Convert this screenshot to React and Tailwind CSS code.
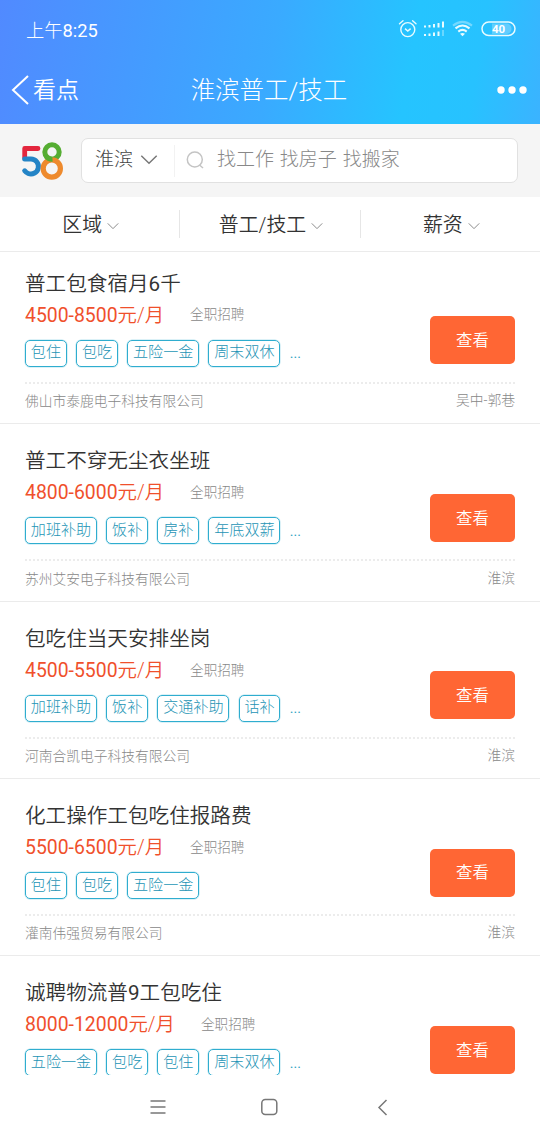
const jobs = [
  { title: '普工包食宿月6千', pay: '4500-8500元/月', tags: ['包住', '包吃', '五险一金', '周末双休'], more: true, company: '佛山市泰鹿电子科技有限公司', place: '吴中-郭巷' },
  { title: '普工不穿无尘衣坐班', pay: '4800-6000元/月', tags: ['加班补助', '饭补', '房补', '年底双薪'], more: true, company: '苏州艾安电子科技有限公司', place: '淮滨' },
  { title: '包吃住当天安排坐岗', pay: '4500-5500元/月', tags: ['加班补助', '饭补', '交通补助', '话补'], more: true, company: '河南合凯电子科技有限公司', place: '淮滨' },
  { title: '化工操作工包吃住报路费', pay: '5500-6500元/月', tags: ['包住', '包吃', '五险一金'], more: false, company: '灌南伟强贸易有限公司', place: '淮滨' },
  { title: '诚聘物流普9工包吃住', pay: '8000-12000元/月', tags: ['五险一金', '包吃', '包住', '周末双休'], more: true, company: '', place: '' },
];

function Chevron({ className }) {
  return (
    <svg viewBox="0 0 16 10" fill="none" stroke="currentColor" className={className}>
      <path d="M1 1.5 8 8.5 15 1.5" strokeWidth="1.3" />
    </svg>
  );
}

// Digits are set a step heavier than the characters around them.
function Mixed({ text }) {
  return text.split(/([0-9:-]+)/).map((part, i) =>
    i % 2 ? <span key={i} className="font-normal">{part}</span> : part
  );
}

function StatusIcons() {
  return (
    <svg width="118" height="20" viewBox="0 0 118 20" fill="none" stroke="#e8fbff" className="shrink-0">
      <circle cx="9.8" cy="10.6" r="7" strokeWidth="1.4" />
      <path d="M7 9.6 9.8 12 12.6 9.6" strokeWidth="1.4" />
      <path d="M1.5 4.8 5 1.8M18 4.8 14.6 1.8" strokeWidth="1.4" strokeLinecap="round" />
      <g strokeWidth="2">
        <path d="M27 6.500v2M31.500 6v2.500M36 5v3.500M40.500 4v4.500M45 2.500v6" />
        <path d="M27 15v2M31.500 14.500v2.500M36 13.500v3.500M40.500 12.500v4.500" />
        <path d="M45 11v6" opacity=".35" />
      </g>
      <g strokeWidth="2.100">
        <path d="M55 6.6Q64.500 -1 74 6.600" opacity=".4" />
        <path d="M57.500 9.400Q64.500 3.600 71.500 9.400" />
        <path d="M60.300 12.600Q64.500 9.200 68.700 12.600" />
      </g>
      <path d="M62 14.800Q64.500 13 67 14.800L64.500 17.200Z" fill="#e8fbff" stroke="none" />
      <path d="M94 4.500h14.500a5 5 0 0 1 5 5v.5a5 5 0 0 1-5 5H94z" fill="#fff" opacity=".25" stroke="none" />
      <rect x="84" y="3" width="33" height="13.500" rx="6.750" strokeWidth="1.500" />
      <text x="100.500" y="13.800" textAnchor="middle" fill="#fff" stroke="none" fontSize="11.500" fontWeight="700" fontFamily="Roboto, sans-serif">40</text>
    </svg>
  );
}

function Logo() {
  return (
    <svg width="44" height="40" viewBox="0 0 44 40" fill="none" className="shrink-0">
      <circle cx="32" cy="11" r="7.200" stroke="#55ad32" strokeWidth="5" />
      <path d="M18 7.500H4.700V17" stroke="#e3263d" strokeWidth="4.800" strokeLinejoin="round" strokeLinecap="round" />
      <path d="M4.700 18h6.300a7.500 7.500 0 1 1-2.800 14.500q-2-.8-3.500-2.700" stroke="#2484c6" strokeWidth="5" strokeLinecap="round" strokeLinejoin="round" />
      <circle cx="31.800" cy="27.500" r="8.600" stroke="#ee8a2d" strokeWidth="5.200" />
      <path d="M26 15.200q2.500 3.200 6.500 3" stroke="#55ad32" strokeWidth="5" />
    </svg>
  );
}

function JobCard({ job, first }) {
  return (
    <article className={`flex shrink-0 flex-col border-b border-[#ebebeb] px-[25px] ${first ? 'h-[172.4px] pt-[15.7px]' : 'h-[177.35px] pt-[21px]'}`}>
      <div className="flex h-[114px] shrink-0 justify-between">
        <div className="flex flex-col pt-[1px]">
          <h2 className="h-[30px] text-[20.6px] leading-[30px] text-[#333]"><Mixed text={job.title} /></h2>
          <div className="flex h-[33px] items-center">
            <span className="text-[19.4px] leading-[33px] text-[#f0502c]"><Mixed text={job.pay} /></span>
            <span className="ml-[26px] pb-px text-[13.6px] font-light text-[#888]">全职招聘</span>
          </div>
          <div className="mt-[8px] flex items-center gap-[9.3px]">
            {job.tags.map((tag) => (
              <span key={tag} className="flex h-[27px] items-center justify-center rounded-[5px] border border-[#2fadcf] px-[4.8px] pb-px text-[15.1px] font-light leading-none text-[#1d94b5] shadow-[0_0_0_0.5px_rgba(47,173,207,0.35)]">{tag}</span>
            ))}
            {job.more && <span className="text-[14px] font-normal leading-none text-[#2fa3c2]">...</span>}
          </div>
        </div>
        <button className="mt-[48.500px] h-[48px] w-[85px] rounded-[5px] bg-[#ff6634] pt-[2px] text-[16.4px] text-white">查看</button>
      </div>
      <div className="shrink-0 border-t-2 border-dotted border-[#ececec]" />
      <div className="flex h-[38px] shrink-0 items-center justify-between pb-[3px] text-[13.75px] font-light text-[#888]">
        <span>{job.company}</span>
        <span className="pb-[2px]">{job.place}</span>
      </div>
    </article>
  );
}

export default function App() {
  return (
    <div className="flex h-[1140px] w-[540px] flex-col overflow-hidden bg-white font-['Roboto','Noto_Sans_CJK_SC',sans-serif] font-[350]">
      <header className="flex h-[124px] shrink-0 flex-col bg-[linear-gradient(100deg,#518aff_0%,#459aff_25%,#3aaaff_50%,#25c4ff_75%,#27c2ff_87%,#3bb3ff_100%)] text-white">
        <div className="flex h-[58px] items-center justify-between pl-[26px] pr-[24px]">
          <span className="pt-[3px] text-[18.300px] font-light"><Mixed text="上午8:25" /></span>
          <StatusIcons />
        </div>
        <div className="grid h-[64px] grid-cols-[1fr_auto_1fr] items-center pl-[11px] pr-[13px]">
          <div className="flex items-center gap-[3px]">
            <svg width="19" height="30" viewBox="0 0 19 30" fill="none" stroke="currentColor" strokeWidth="2"><path d="M17 1 2 15 17 29" /></svg>
            <span className="pt-[2px] text-[23px]">看点</span>
          </div>
          <h1 className="pt-[3px] text-[24.5px] font-light">淮滨普工/技工</h1>
          <svg width="30" height="8" viewBox="0 0 30 8" fill="currentColor" className="justify-self-end"><circle cx="4" cy="4" r="3.700" /><circle cx="15" cy="4" r="3.700" /><circle cx="26" cy="4" r="3.700" /></svg>
        </div>
      </header>

      <div className="flex h-[73px] shrink-0 items-center bg-[#f5f5f5] pl-[20px] pr-[22px]">
        <Logo />
        <div className="ml-[17px] flex h-[45px] flex-1 items-center rounded-[7px] border border-[#e1e1e1] bg-white">
          <span className="ml-[13px] pb-px text-[19px] font-light text-[#444]">淮滨</span>
          <Chevron className="ml-[7px] mb-[3px] h-[11px] w-[18px] text-[#777]" />
          <div className="ml-[16px] h-[32px] w-px bg-[#f2f2f2]" />
          <svg width="18" height="18" viewBox="0 0 18 18" fill="none" stroke="#c4c4c4" strokeWidth="1.500" className="ml-[11px] mb-[2px]"><circle cx="8.800" cy="8.500" r="7.500" /><path d="M13.500 14 17 17" /></svg>
          <span className="ml-[13px] pb-px text-[19px] font-light text-[#888] [word-spacing:1.2px]">找工作 找房子 找搬家</span>
        </div>
      </div>

      <div className="flex h-[55px] shrink-0 items-center border-b border-[#ebebeb] text-[19.900px] text-[#333]">
        {['区域', '普工/技工', '薪资'].map((name, i) => (
          <div key={name} className={`flex h-[28px] flex-1 items-center justify-center gap-[5px] pl-[2px] pt-[3px] ${i < 2 ? 'border-r border-[#e6e6e6]' : ''}`}>
            <span>{name}</span>
            <Chevron className="h-[8px] w-[12px] text-[#888]" />
          </div>
        ))}
      </div>

      <main className="flex h-[823px] shrink-0 flex-col overflow-hidden">
        {jobs.map((job, i) => <JobCard key={job.title} job={job} first={i === 0} />)}
      </main>

      <nav className="flex h-[65px] items-center bg-white pb-px pl-[150px] text-[#777]">
        <svg width="16" height="16" viewBox="0 0 16 16" stroke="currentColor" strokeWidth="1.400"><path d="M.5 2h15M.5 8h15M.5 14h15" /></svg>
        <svg width="18" height="18" viewBox="0 0 18 18" fill="none" stroke="currentColor" strokeWidth="1.500" className="ml-[94px]"><rect x="1.800" y="1.500" width="15" height="15" rx="3.500" /></svg>
        <svg width="11" height="17" viewBox="0 0 11 17" fill="none" stroke="currentColor" strokeWidth="1.500" className="ml-[99px]"><path d="M9.500 1 2 8.500 9.500 16" /></svg>
      </nav>
    </div>
  );
}
